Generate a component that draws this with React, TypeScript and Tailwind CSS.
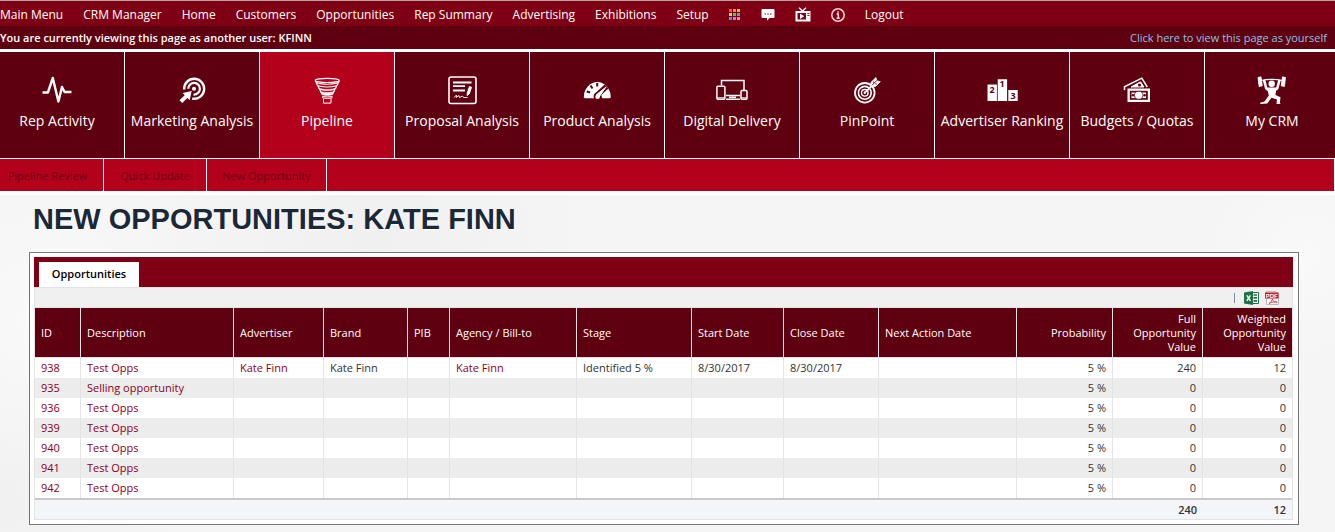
import React from "react";

const UI_FONT = "font-['Open_Sans','Segoe_UI',sans-serif]";

function Glyph({ children }: { children: React.ReactNode }) {
  return (
    <svg viewBox="0 0 32 30" className="h-[30px] w-8" fill="none" stroke="white" aria-hidden="true">
      {children}
    </svg>
  );
}

const PulseIcon = () => (
  <Glyph>
    <path d="M1.5 17.5h5.4L11.8 3l5.6 23.5L21 12l2.6 5h6.9" strokeWidth="2.4" strokeLinejoin="round" />
  </Glyph>
);

const ClickTargetIcon = () => (
  <Glyph>
    <path d="M8.2 14.5a10 10 0 1 1 8 9.1" strokeWidth="2.4" />
    <path d="M12.3 13.8a5.8 5.8 0 1 1 5.2 5.7" strokeWidth="2.2" />
    <circle cx="18" cy="13.7" r="2" fill="white" stroke="none" />
    <path d="M6.2 28l-2.700-2.700 5.200-5-2-2.300 9-2-2 9-2.300-2z" fill="white" stroke="none" />
  </Glyph>
);

const FunnelIcon = () => (
  <Glyph>
    <ellipse cx="16.3" cy="5.4" rx="12" ry="2.1" strokeWidth="1.2" />
    <path d="M4.3 6.2c.6 4 23.4 4 24 0M5.4 9.3c2.5 3.6 19.3 3.6 21.8 0M4.3 6l7 13.5M28.3 6l-7 13.5" strokeWidth="1.1" />
    <path d="M7.4 12.8c4 2.4 13.8 2.4 17.8 0l-.6 1.200c-4 2-12.600 2-16.600 0z" fill="white" strokeWidth=".5" />
    <path d="M9.2 16.4c3.800 1.400 10.400 1.400 14.200 0l-2 3.400c-3 .8-7.200.8-10.200 0z" fill="white" strokeWidth=".5" />
    <path d="M11.600 21.300c2.500.8 7 .8 9.500 0v1.500c-2.500.8-7 .8-9.500 0zM12.500 23.500v4.600h7.500v-4.600" strokeWidth="1" />
  </Glyph>
);

const ProposalIcon = () => (
  <Glyph>
    <rect x="3" y="2" width="27" height="26.500" rx="2" strokeWidth="1.600" />
    <path d="M7 7.500h18.500M7 11.200h12M7 15.500h12" strokeWidth="1.800" />
    <path d="M8 22.500l2.500-2.500-.5 2.500 3-2 .5 2 3-1.500 1 1.500h4" strokeWidth=".9" />
    <path d="M23.500 11.500l2 .8-2.200 6.500-2.100 1.800.1-2.800z" fill="white" strokeWidth="1" />
  </Glyph>
);

const GaugeIcon = () => (
  <Glyph>
    <path d="M2.800 22.500a13.500 15.500 0 0 1 27 0l-1.300.8h-7l-2.300-3-4.500 3H4z" fill="white" stroke="none" />
    <path d="M16.200 8v3.500M9.500 10.500l2 3M5.800 16.500l3.300 1" stroke="#5f0010" strokeWidth="2" />
    <path d="M25.500 11.500L15.800 20.500" stroke="#5f0010" strokeWidth="5.500" />
    <circle cx="16.600" cy="21.500" r="4" fill="#5f0010" stroke="none" />
    <path d="M25 12l-7 10-2.500-2.300z" fill="white" strokeWidth="1" />
    <circle cx="16.600" cy="21.700" r="2.300" fill="white" stroke="none" />
  </Glyph>
);

const DevicesIcon = () => (
  <Glyph>
    <path d="M5.500 10.500v-5h22.500v9.500M10 20.500h14M10 24.300h14" strokeWidth="1.500" />
    <path d="M13 22.300h7" strokeWidth="1.600" />
    <rect x=".9" y="11.300" width="8" height="13" rx="1" strokeWidth="1.500" />
    <path d="M1 22.800h8M25 22.800h6" strokeWidth="1" />
    <rect x="25" y="15.500" width="6" height="8.800" rx="1" strokeWidth="1.500" />
  </Glyph>
);

const BullseyeIcon = () => (
  <Glyph>
    <circle cx="13.800" cy="17.800" r="9.800" strokeWidth="1.800" />
    <circle cx="13.800" cy="17.800" r="6.400" strokeWidth="1.600" />
    <circle cx="13.800" cy="17.800" r="3.300" strokeWidth="1.400" />
    <circle cx="13.800" cy="17.800" r="1.200" fill="white" stroke="none" />
    <path d="M14 17.600l8-8" strokeWidth="1.600" />
    <path d="M19.800 11.800l.2-4.500 5-4.800.8 3.300 3.500.9-4.800 4.800z" fill="white" strokeWidth=".8" />
    <path d="M21 10.300l5-5M22.500 6.500l.3 1.700M24.300 8.800l1.500.3" stroke="#5f0010" strokeWidth=".9" />
  </Glyph>
);

const PodiumIcon = () => (
  <Glyph>
    <path d="M1.500 9.500h9.400V26H1.500zM11.700 4.200h9.400V26h-9.400zM22.300 15h9.400v11h-9.400z" fill="white" stroke="none" />
    <g className="font-['Open_Sans',sans-serif] text-[9px] font-bold" fill="#5f0010" stroke="none" textAnchor="middle">
      <text x="6.200" y="18">2</text>
      <text x="16.200" y="12">1</text>
      <text x="27" y="23.500">3</text>
    </g>
  </Glyph>
);

const CashIcon = () => (
  <Glyph>
    <path d="M3.500 15v-3.200L20.800 3.200l5.500 8.800" strokeWidth="1.500" />
    <path d="M10 12l9.500-5.200L23 12z" fill="white" strokeWidth="1" />
    <circle cx="18.500" cy="10" r="1.600" fill="#5f0010" stroke="none" />
    <rect x="6.500" y="13.500" width="22.500" height="13.500" fill="white" stroke="none" />
    <rect x="8.800" y="15.800" width="18" height="9" fill="#5f0010" stroke="none" />
    <path d="M10.500 17.500h14.500v5.600H10.500z" fill="white" stroke="none" />
    <ellipse cx="17.700" cy="20.300" rx="4.200" ry="4" fill="white" stroke="#5f0010" strokeWidth=".8" />
    <circle cx="11.900" cy="20.300" r="1.200" fill="#5f0010" stroke="none" />
    <circle cx="23.600" cy="20.300" r="1.200" fill="#5f0010" stroke="none" />
  </Glyph>
);

const LifterIcon = () => (
  <Glyph>
    <path d="M2 2.500l3-.7 1.300 9-3.200.8zM29.500 2.500l-3-.7-1.300 9 3.200.8z" fill="white" strokeWidth=".8" />
    <path d="M5 5.500c6-1.500 16-1.500 21.500 0" strokeWidth="1.200" />
    <circle cx="15.700" cy="8.800" r="3.200" fill="white" stroke="none" />
    <path d="M8 5l2.300 8.500 2.800 2M23.500 5l-2.300 8.500-2.800 2" strokeWidth="2.600" strokeLinejoin="round" />
    <path d="M11 12.500h9.500L19.500 20l5 2.300-.7 5.700 1 1h-4.300l.5-4.500-5.500-1.700-4.300 5.700L4.500 29l-.5-1.300 4.500-1.200 4.300-6z" fill="white" stroke="none" />
  </Glyph>
);

const GridIcon = () => (
  <svg viewBox="0 0 12 12" className="size-3" aria-hidden="true">
    {[
      ["#e8505b", "#f08a4b", "#f2b84b"],
      ["#c9d96b", "#5fc06a", "#4fb0a0"],
      ["#5b8de0", "#a58fd0", "#e58ac0"],
    ].map((row, y) =>
      row.map((fill, x) => <rect key={fill} x={x * 4} y={y * 4} width="3" height="3" fill={fill} />),
    )}
  </svg>
);

const ChatIcon = () => (
  <svg viewBox="0 0 14 13" className="h-[13px] w-3.5" aria-hidden="true">
    <path d="M1.500 1h11a1 1 0 0 1 1 1v7a1 1 0 0 1-1 1H8.500L6 12.800V10H1.500a1 1 0 0 1-1-1V2a1 1 0 0 1 1-1z" fill="white" />
    <path d="M3.500 6h1.500M6.300 6h1.500M9 6h1.500" stroke="#7f0014" strokeWidth="1.200" />
  </svg>
);

const TvIcon = () => (
  <svg viewBox="0 0 16 15" className="h-[15px] w-4" fill="none" stroke="white" aria-hidden="true">
    <path d="M4 .8l3.500 3.200L11 .8" strokeWidth="1.300" />
    <path d="M.5 4h15v10.500H.5z" fill="white" stroke="none" />
    <path d="M2.500 6h8.500v6.500H2.500z" fill="#7f0014" stroke="none" />
    <path d="M5 6.600l4.200 2.700L5 12z" fill="white" stroke="none" />
    <path d="M12.300 6.500h2.200M12.300 8.500h2.200" stroke="#7f0014" strokeWidth=".9" />
  </svg>
);

const InfoIcon = () => (
  <svg viewBox="0 0 14 14" className="size-3.5" fill="none" stroke="#ecd5d9" aria-hidden="true">
    <circle cx="7" cy="7" r="6.200" strokeWidth="1.500" />
    <path d="M5.600 6h1.700v4.300M5.500 10.300h3.300M7 3.200v1.500" strokeWidth="1.600" />
  </svg>
);

const ExcelIcon = () => (
  <svg viewBox="0 0 15 14" className="h-3.5 w-[15px]" aria-hidden="true">
    <path d="M7 1.500h7.500v11H7z" fill="#fff" stroke="#1f7246" />
    <path d="M9.500 4h3.500M9.500 6.900h3.500M9.500 9.900h3.500" stroke="#1f7246" strokeWidth="1.700" />
    <path d="M0 1.500L9 0v14L0 12.500z" fill="#1f7246" />
    <path d="M2.800 4.300l3.600 5.500M6.400 4.300L2.800 9.800" stroke="#fff" strokeWidth="1.400" />
  </svg>
);

const PdfIcon = () => (
  <svg viewBox="0 0 14 14" className="size-3.5" aria-hidden="true">
    <path d="M1.500.5h9l3 2.500v10.500h-12z" fill="#fff" stroke="#b9b9b9" />
    <path d="M0 1.500h13.500V7.500H0z" fill="#c4161c" />
    <text x="6.700" y="6.600" textAnchor="middle" fill="#fff" className="font-['Liberation_Sans',sans-serif] text-[6px] font-bold">
      PDF
    </text>
    <path d="M4 12.500c2-1 3.300-3 3.200-4.800.4 2 2 3.600 5 3.500-3-.6-5.500-.2-8.200 1.300z" fill="none" stroke="#d8373c" strokeWidth=".9" />
  </svg>
);

const topLinks = ["Main Menu", "CRM Manager", "Home", "Customers", "Opportunities", "Rep Summary", "Advertising", "Exhibitions", "Setup"];

const topIcons = [
  { label: "Apps", Icon: GridIcon },
  { label: "Messages", Icon: ChatIcon },
  { label: "Videos", Icon: TvIcon },
  { label: "Information", Icon: InfoIcon },
];

const modules = [
  { label: "Rep Activity", Icon: PulseIcon },
  { label: "Marketing Analysis", Icon: ClickTargetIcon },
  { label: "Pipeline", Icon: FunnelIcon, active: true },
  { label: "Proposal Analysis", Icon: ProposalIcon },
  { label: "Product Analysis", Icon: GaugeIcon },
  { label: "Digital Delivery", Icon: DevicesIcon },
  { label: "PinPoint", Icon: BullseyeIcon },
  { label: "Advertiser Ranking", Icon: PodiumIcon },
  { label: "Budgets / Quotas", Icon: CashIcon },
  { label: "My CRM", Icon: LifterIcon },
];

const subLinks = [
  { label: "Pipeline Review", width: "w-[104px] pr-2" },
  { label: "Quick Update", width: "w-[103px]" },
  { label: "New Opportunity", width: "w-[120px]" },
];

const columns = [
  { title: "ID", width: "w-[46px]" },
  { title: "Description", width: "w-[153px]" },
  { title: "Advertiser", width: "w-[90px]" },
  { title: "Brand", width: "w-[84px]" },
  { title: "PIB", width: "w-[42px]" },
  { title: "Agency / Bill-to", width: "w-[127px]" },
  { title: "Stage", width: "w-[115px]" },
  { title: "Start Date", width: "w-[92px]" },
  { title: "Close Date", width: "w-[95px]" },
  { title: "Next Action Date", width: "w-[138px]" },
  { title: "Probability", width: "w-[96px]", right: true },
  { title: "Full Opportunity Value", width: "w-[90px]", right: true },
  { title: "Weighted Opportunity Value", width: "w-[89px]", right: true },
];

const LINKED = [0, 1, 2, 5];

const rows: string[][] = [
  ["938", "Test Opps", "Kate Finn", "Kate Finn", "", "Kate Finn", "Identified 5 %", "8/30/2017", "8/30/2017", "", "5 %", "240", "12"],
  ...[
    ["935", "Selling opportunity"],
    ["936", "Test Opps"],
    ["939", "Test Opps"],
    ["940", "Test Opps"],
    ["941", "Test Opps"],
    ["942", "Test Opps"],
  ].map(([id, name]) => [id, name, "", "", "", "", "", "", "", "", "5 %", "0", "0"]),
];

function OpportunitiesTable() {
  return (
    <table className="w-full table-fixed border-separate border-spacing-0 border-x border-[#e3e3e3] text-[11px] leading-[14px]">
      <thead>
        <tr className="h-[50px] bg-[#5f0010] text-white">
          {columns.map((c) => (
            <th
              key={c.title}
              scope="col"
              className={`${c.width} border-r border-b border-[#e3e3e3] px-1.5 font-normal last:border-r-0 ${c.right ? "pl-4 text-right" : "text-left whitespace-nowrap"}`}
            >
              {c.title}
            </th>
          ))}
        </tr>
      </thead>
      <tbody>
        {rows.map((row) => (
          <tr key={row[0]} className="h-5 bg-white text-[#333] even:bg-[#ececec]">
            {row.map((cell, i) => (
              <td
                key={columns[i].title}
                className={`border-r border-[#e3e3e3] px-1.5 whitespace-nowrap last:border-r-0 ${columns[i].right ? "text-right" : ""}`}
              >
                {cell && LINKED.includes(i) ? (
                  <a href="#" className="text-[#8a0018]">
                    {cell}
                  </a>
                ) : (
                  cell
                )}
              </td>
            ))}
          </tr>
        ))}
      </tbody>
      <tfoot>
        <tr className="h-[22px] bg-[#f4f5f8] font-semibold text-[#333]">
          <td colSpan={11} className="border-t-2 border-b border-t-[#c9c9cb] border-b-[#e3e3e3]" />
          <td className="border-t-2 border-b border-t-[#c9c9cb] border-b-[#e3e3e3] px-1.5 text-right">240</td>
          <td className="border-t-2 border-b border-t-[#c9c9cb] border-b-[#e3e3e3] px-1.5 text-right">12</td>
        </tr>
      </tfoot>
    </table>
  );
}

export default function App() {
  return (
    <div
      className={`min-h-screen overflow-x-hidden bg-[#f5f5f5] bg-[radial-gradient(circle_at_28%_45%,#f0f0f0_0,transparent_22%),radial-gradient(circle_at_98%_48%,#f9f9f9_0,transparent_8%),radial-gradient(circle_at_3%_60%,#f9f9f9_0,transparent_12%),radial-gradient(circle_at_0%_95%,#f1f1f1_0,transparent_14%)] ${UI_FONT}`}
    >
      <header className="bg-white pb-1">
        <nav className="flex h-[26px] items-center gap-5 border-t border-[#b5a5a7] bg-[#7f0014] pt-0.5 text-[12px] leading-4 whitespace-nowrap text-white">
          {topLinks.map((label) => (
            <a key={label} href="#">
              {label}
            </a>
          ))}
          {topIcons.map(({ label, Icon }) => (
            <a key={label} href="#" aria-label={label}>
              <Icon />
            </a>
          ))}
          <a href="#">Logout</a>
        </nav>
        <div className="flex h-[23px] items-center justify-between bg-[#5f0010] pr-2 text-[11px] leading-4">
          <p className="font-semibold text-white">You are currently viewing this page as another user: KFINN</p>
          <a href="#" className="text-[#8fc1ea]">
            Click here to view this page as yourself
          </a>
        </div>

        <div className="mt-[3px] overflow-hidden">
          <nav className="-mr-[5px] -ml-2.5 flex">
            {modules.map(({ label, Icon, active }) => (
              <a
                key={label}
                href="#"
                aria-current={active ? "page" : undefined}
                className={`flex h-[106px] min-w-0 flex-1 flex-col items-center gap-1.5 border-r border-white pt-[23px] text-[14px] leading-5 whitespace-nowrap text-white ${active ? "bg-[#b3001b]" : "bg-[#5f0010]"}`}
              >
                <Icon />
                {label}
              </a>
            ))}
          </nav>
        </div>

        <nav className="mt-px mr-px flex h-8 bg-[#b3001b] text-[11px] text-[#6e0010]">
          {subLinks.map(({ label, width }) => (
            <a key={label} href="#" className={`${width} flex items-center justify-center border-r border-white pt-0.5 whitespace-nowrap`}>
              {label}
            </a>
          ))}
        </nav>
      </header>

      <main className="pr-9 pl-[29px]">
        <h1 className="px-1 pt-2 font-['Liberation_Sans',Arial,sans-serif] text-[29px] leading-8 font-bold text-[#1b2838] [text-shadow:1px_1px_1px_white]">
          NEW OPPORTUNITIES: KATE FINN
        </h1>
        <section className="mt-[17px] border border-[#757575] bg-white py-1 pr-[5px] pl-1">
          <div role="tablist" className="flex h-[30px] items-end bg-[#7f0014] pl-[5px]">
            <button role="tab" aria-selected="true" className="h-[25px] w-[100px] bg-white text-[11px] font-semibold text-black">
              Opportunities
            </button>
          </div>
          <div className="flex h-[21px] items-center justify-end gap-1.5 border border-[#e3e3e3] bg-[#f0f0f0] pr-[13px]">
            <span className="mr-[3px] h-2.5 w-px bg-[#8088a8]" />
            <button aria-label="Export to Excel">
              <ExcelIcon />
            </button>
            <button aria-label="Export to PDF">
              <PdfIcon />
            </button>
          </div>
          <OpportunitiesTable />
        </section>
      </main>
    </div>
  );
}
